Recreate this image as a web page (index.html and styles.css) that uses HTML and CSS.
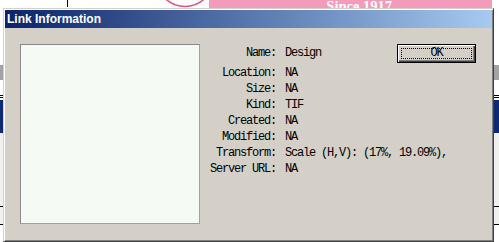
FILE: index.html
```html
<!DOCTYPE html>
<html>
<head>
<meta charset="utf-8">
<link rel="stylesheet" href="styles.css">
</head>
<body>
<div class="app">
  <div class="header">
    <div class="hline"></div>
    <svg class="ring" width="40" height="10" viewBox="0 0 40 10"><circle cx="20" cy="-22" r="28.5" fill="none" stroke="#d9558a" stroke-width="1.6"/></svg>
    <div class="band"><span class="since">Since 1917</span></div>
  </div>
  <div class="gap g1"></div>
  <div class="grayband"></div>
  <div class="gap g2"></div>
  <div class="rule"></div>
  <div class="gap g3"></div>
  <div class="rule"></div>
  <div class="gap g4"></div>
  <div class="navy"></div>
  <div class="gap g5"></div>
  <div class="rule"></div>
  <div class="gap g6"></div>
  <div class="rule"></div>
</div>

<div class="dialog">
  <div class="titlebar">Link Information</div>
  <div class="body">
    <div class="preview"></div>
    <div class="info">
      <div class="lbl first">Name:</div><div class="val first">Design</div>
      <div class="okcell"><button class="ok"><span class="focus">OK</span></button></div>
      <div class="lbl">Location:</div><div class="val wide">NA</div>
      <div class="lbl">Size:</div><div class="val wide">NA</div>
      <div class="lbl">Kind:</div><div class="val wide">TIF</div>
      <div class="lbl">Created:</div><div class="val wide">NA</div>
      <div class="lbl">Modified:</div><div class="val wide">NA</div>
      <div class="lbl">Transform:</div><div class="val wide">Scale (H,V): (17%, 19.09%),</div>
      <div class="lbl">Server URL:</div><div class="val wide">NA</div>
    </div>
  </div>
</div>
</body>
</html>
```
FILE: styles.css
```css
html, body {
  margin: 0;
  padding: 0;
  background: #ffffff;
  width: 499px;
  height: 242px;
  overflow: hidden;
  position: relative;
}

.app {
  display: flex;
  flex-direction: column;
  width: 499px;
}

.header {
  height: 30px;
  display: flex;
  position: relative;
  background: #ffffff;
}
.hline {
  width: 1px;
  height: 7px;
  background: #000;
  margin-left: 67px;
}
.ring {
  margin-left: 97px;
  display: block;
}
.band {
  margin-left: 4px;
  width: 283px;
  height: 30px;
  background: #f29bba;
  display: flex;
  justify-content: flex-end;
}
.since {
  font-family: "Liberation Serif", serif;
  font-weight: bold;
  font-size: 14.5px;
  color: #ffffff;
  line-height: 14px;
  margin-top: -1px;
  margin-right: 100px;
}

.gap { background: #ffffff; }
.g1 { height: 35px; }
.grayband { height: 15px; background: #a3a3a3; }
.g2 { height: 15px; }
.rule { height: 1px; background: #000; }
.g3 { height: 1px; }
.g4 { height: 2px; }
.navy { height: 33px; background: #0e2a72; }
.g5 { height: 73px; background: #f0f0ee; }
.g6 { height: 17px; background: #f0f0ee; }

.dialog {
  position: absolute;
  left: 3px;
  top: 8px;
  width: 491px;
  height: 234px;
  box-sizing: border-box;
  background: #d4d0c8;
  border: 1px solid;
  border-color: #d4d0c8 #404040 #404040 #d4d0c8;
  box-shadow: inset 1px 1px #ffffff, inset -1px -1px #808080;
  padding: 1px;
  display: flex;
  flex-direction: column;
}

.titlebar {
  height: 18px;
  background: linear-gradient(to right, #0a246a, #a6caf0);
  color: #ffffff;
  font-family: "Liberation Sans", Arial, sans-serif;
  font-weight: bold;
  font-size: 12px;
  line-height: 18px;
  padding-left: 2px;
}

.body {
  display: flex;
  padding: 16px 16px 0 15px;
  font-family: "Liberation Mono", monospace;
  font-size: 12px;
  letter-spacing: -1.2px;
  color: #000;
}

.preview {
  width: 180px;
  height: 180px;
  box-sizing: border-box;
  background: #f5faf5;
  border: 1px solid #8a8a8a;
  border-right-color: #a0a0a0;
  border-bottom-color: #a0a0a0;
  flex: none;
}

.info {
  margin-left: 10px;
  flex: 1;
  display: grid;
  grid-template-columns: 66px 1fr 79px;
  grid-template-rows: 21px;
  grid-auto-rows: 16px;
  align-items: start;
}

.lbl {
  text-align: right;
  line-height: 16px;
  white-space: nowrap;
}
.val {
  padding-left: 9px;
  line-height: 16px;
  white-space: nowrap;
}
.lbl.first, .val.first {
  line-height: 19px;
}
.val.wide {
  grid-column: 2 / 4;
}

.okcell { height: 19px; }
.ok {
  width: 79px;
  height: 19px;
  box-sizing: border-box;
  margin: 0;
  padding: 3px;
  background: #d4d0c8;
  border: 1px solid #000;
  box-shadow: inset 1px 1px #ffffff, inset -1px -1px #404040, inset -2px -2px #808080;
  display: flex;
  font: inherit;
  letter-spacing: inherit;
  color: #000;
}
.focus {
  flex: 1;
  border: 1px dotted #000;
  display: flex;
  align-items: center;
  justify-content: center;
  line-height: 11px;
}
```
